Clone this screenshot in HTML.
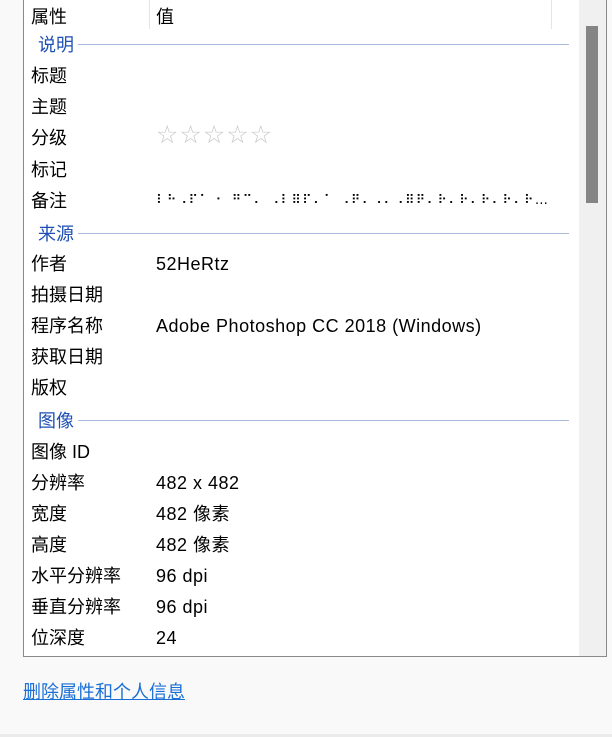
<!DOCTYPE html>
<html><head><meta charset="utf-8"><style>
html,body{margin:0;padding:0;width:612px;height:737px;background:#f9f9f9;overflow:hidden;font-family:"Liberation Sans","Microsoft YaHei","Noto Sans CJK SC",sans-serif;font-size:17px;color:#000}
.panel{position:absolute;left:23px;top:-1px;width:582px;height:657px;border:1px solid #8a8a8a;border-top:none;background:#fff}
.sb{position:absolute;left:555px;top:0;width:27px;height:657px;background:#f0f0f0}
.thumb{position:absolute;left:7px;top:27px;width:12px;height:177px;background:#858585}
.r{position:absolute;left:7px;line-height:20px;height:20px;white-space:nowrap;font-size:18px}
.v{position:absolute;left:132px;line-height:20px;height:20px;white-space:nowrap;font-size:18px;letter-spacing:0.5px}
.sec{position:absolute;left:14px;color:#1e4fb4;line-height:20px;font-size:18px}
.ln{position:absolute;left:54px;width:491px;height:1px;background:#aabbdd}
.div{position:absolute;top:0;width:1px;height:30px;background:#e5e5e5}
.stars{color:#c8c8c8;font-size:25px;letter-spacing:1px;font-family:"DejaVu Sans",sans-serif}
.br{font-family:"DejaVu Sans",sans-serif;font-size:13px;letter-spacing:1.3px}
a{position:absolute;left:23px;top:681px;color:#1a6fd6;text-decoration:underline;line-height:22px;font-size:18px}
.bot{position:absolute;left:0;top:734px;width:612px;height:3px;background:#ebebeb}
</style></head><body>
<div class="panel">
<div class="div" style="left:125px"></div>
<div class="div" style="left:527px"></div>
<div class="r" style="top:8px">属性</div><div class="v" style="top:8px">值</div>
<div class="sec" style="top:36px">说明</div><div class="ln" style="top:45px"></div>
<div class="r" style="top:67px">标题</div>
<div class="r" style="top:98px">主题</div>
<div class="r" style="top:129px">分级</div><div class="v stars" style="top:126px">☆☆☆☆☆</div>
<div class="r" style="top:161px">标记</div>
<div class="r" style="top:192px">备注</div><div class="v br" style="top:192px">⠇⠓⠠⠏⠁ ⠂ ⠛⠉⠄ ⠠⠇⠿⠏⠄⠁ ⠠⠟⠄⠠⠄⠠⠿⠟⠄⠗⠄⠗⠄⠗⠄⠗⠄⠗…</div>
<div class="sec" style="top:225px">来源</div><div class="ln" style="top:234px"></div>
<div class="r" style="top:255px">作者</div><div class="v" style="top:255px">52HeRtz</div>
<div class="r" style="top:286px">拍摄日期</div>
<div class="r" style="top:317px">程序名称</div><div class="v" style="top:317px">Adobe Photoshop CC 2018 (Windows)</div>
<div class="r" style="top:348px">获取日期</div>
<div class="r" style="top:379px">版权</div>
<div class="sec" style="top:412px">图像</div><div class="ln" style="top:421px"></div>
<div class="r" style="top:443px">图像 ID</div>
<div class="r" style="top:474px">分辨率</div><div class="v" style="top:474px">482 x 482</div>
<div class="r" style="top:505px">宽度</div><div class="v" style="top:505px">482 像素</div>
<div class="r" style="top:536px">高度</div><div class="v" style="top:536px">482 像素</div>
<div class="r" style="top:567px">水平分辨率</div><div class="v" style="top:567px">96 dpi</div>
<div class="r" style="top:598px">垂直分辨率</div><div class="v" style="top:598px">96 dpi</div>
<div class="r" style="top:629px">位深度</div><div class="v" style="top:629px">24</div>
<div class="sb"><div class="thumb"></div></div>
</div>
<a>删除属性和个人信息</a>
<div class="bot"></div>
</body></html>
